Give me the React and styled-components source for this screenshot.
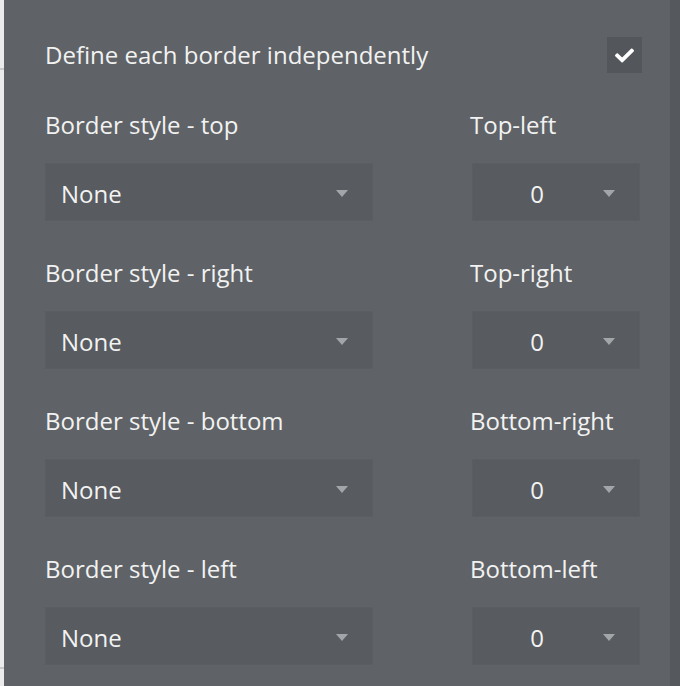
import React from 'react';
import styled, { createGlobalStyle } from 'styled-components';
import { FaCheck } from 'react-icons/fa';

const GlobalStyle = createGlobalStyle`
  html, body {
    margin: 0;
    padding: 0;
    background: #5f6367;
  }
  body {
    font-family: "Open Sans", "Noto Sans", sans-serif;
  }
`;

const Screen = styled.div`
  display: flex;
  width: 680px;
  height: 686px;
  overflow: hidden;
`;

const Backdrop = styled.div`
  width: 4px;
  flex-shrink: 0;
  background: linear-gradient(
    to bottom,
    #ebebeb 0, #ebebeb 68px, #c9c9c9 68px, #c9c9c9 70px,
    #ebebeb 70px, #ebebeb 667px, #c9c9c9 667px, #c9c9c9 669px, #ebebeb 669px
  );
`;

const Panel = styled.div`
  flex: 1;
  background: #5f6367;
  padding: 37px 30px 0 41px;
  display: flex;
  flex-direction: column;
  gap: 36px;
  color: #f2f2f2;
`;

const Edge = styled.div`
  width: 10px;
  flex-shrink: 0;
  background: #55595d;
`;

const HeaderRow = styled.div`
  display: flex;
  align-items: center;
  justify-content: space-between;
  height: 36px;
  margin-right: -2px;
`;

const Text = styled.span`
  font-size: 24px;
  line-height: 30px;
  white-space: nowrap;
`;

const Checkbox = styled.div`
  width: 35px;
  height: 36px;
  background: #53575b;
  display: flex;
  align-items: center;
  justify-content: center;
  color: #ffffff;
`;

const Row = styled.div`
  display: grid;
  grid-template-columns: 330px 170px;
  justify-content: space-between;
  margin-top: 1px;
`;

const Field = styled.div`
  display: flex;
  flex-direction: column;
  gap: 23px;
`;

const Select = styled.div`
  height: 58px;
  width: ${props => props.width}px;
  margin-left: ${props => props.offset || 0}px;
  background: #585c60;
  box-shadow: inset 0 0 0 1px #5a5e62;
  display: flex;
  align-items: center;
  padding: 0 25px 0 16px;
  box-sizing: border-box;
`;

const Value = styled.span`
  flex: 1;
  font-size: 24px;
  line-height: 30px;
  margin-top: 4px;
  text-align: ${props => (props.centered ? 'center' : 'left')};
  color: #f2f2f2;
`;

const Caret = styled.span`
  width: 0;
  height: 0;
  margin-left: 17px;
  margin-top: 3px;
  border-left: 6px solid transparent;
  border-right: 6px solid transparent;
  border-top: 7px solid #a3a6a9;
`;

const rows = [
  ['Border style - top', 'Top-left'],
  ['Border style - right', 'Top-right'],
  ['Border style - bottom', 'Bottom-right'],
  ['Border style - left', 'Bottom-left'],
];

const App = () => {
  return (
    <Screen>
      <GlobalStyle />
      <Backdrop />
      <Panel>
        <HeaderRow>
          <Text>Define each border independently</Text>
          <Checkbox>
            <FaCheck size={19} />
          </Checkbox>
        </HeaderRow>
        {rows.map(([style, radius]) => (
          <Row key={style}>
            <Field>
              <Text>{style}</Text>
              <Select width={328}>
                <Value>None</Value>
                <Caret />
              </Select>
            </Field>
            <Field>
              <Text>{radius}</Text>
              <Select width={168} offset={2}>
                <Value centered>0</Value>
                <Caret />
              </Select>
            </Field>
          </Row>
        ))}
      </Panel>
      <Edge />
    </Screen>
  );
};

export default App;
